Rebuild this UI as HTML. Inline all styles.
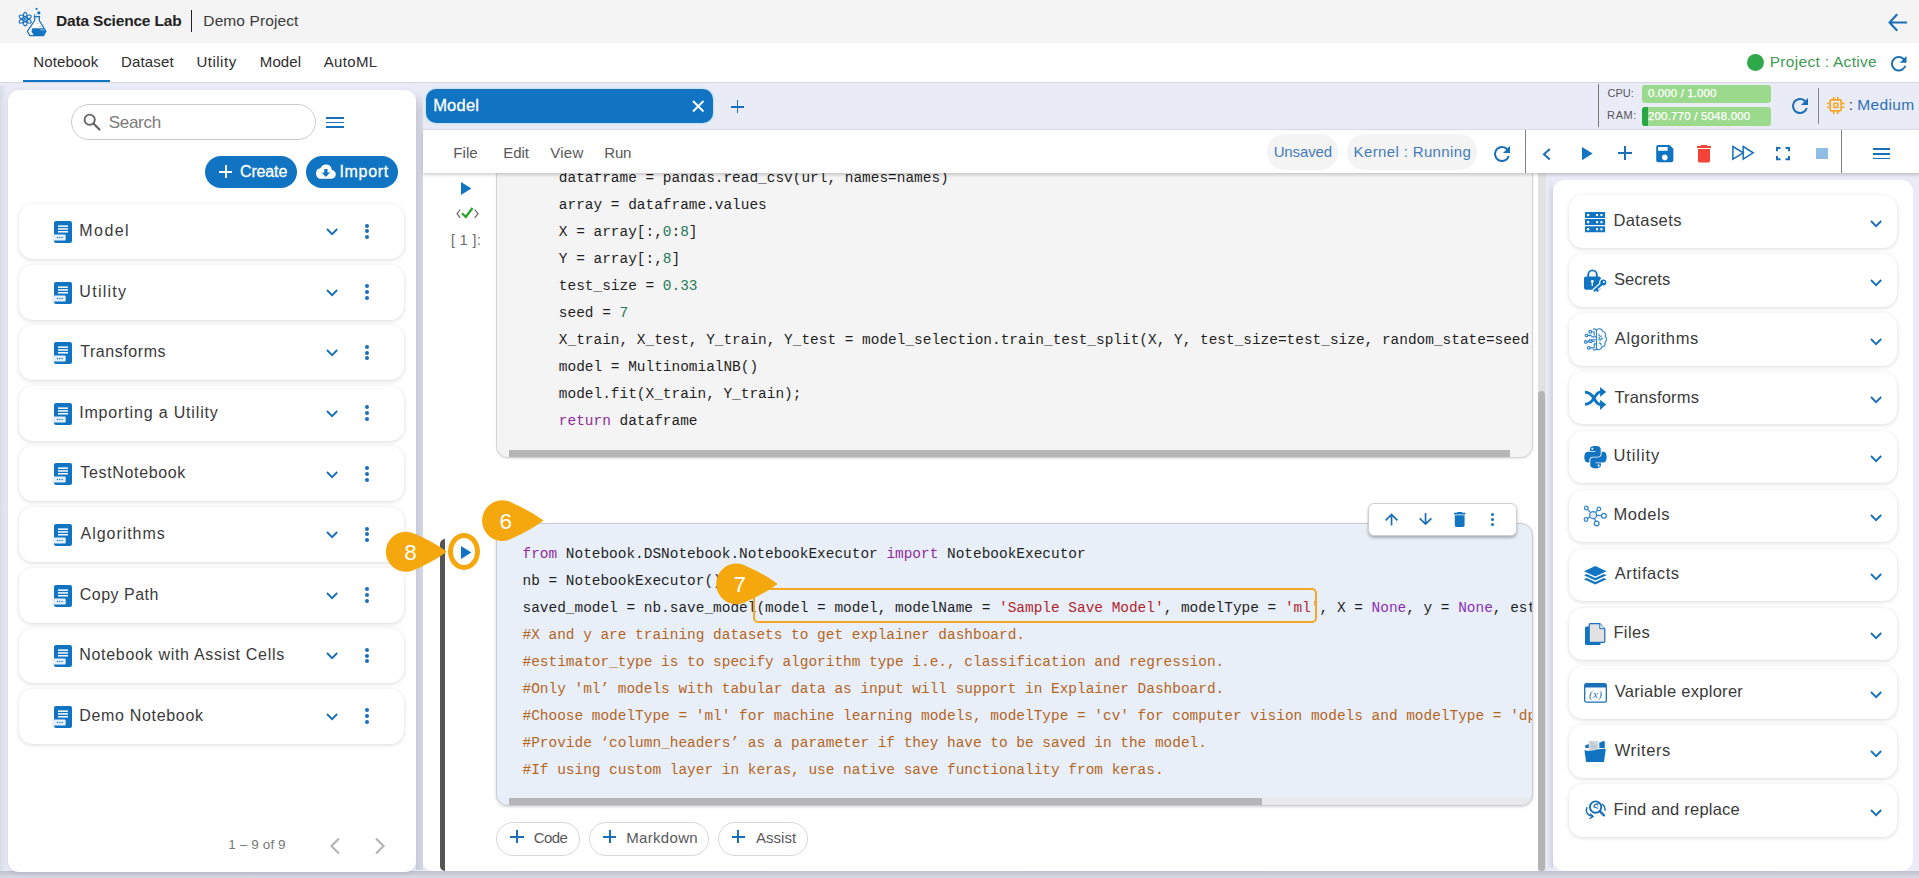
<!DOCTYPE html>
<html lang="en">
<head>
<meta charset="utf-8">
<title>Data Science Lab</title>
<style>
*{box-sizing:border-box;margin:0;padding:0}
html,body{width:1919px;height:878px;overflow:hidden}
body{position:relative;background:#e9ecf7;font-family:"Liberation Sans",sans-serif;color:#333;font-size:15px}
.abs{position:absolute}
.t{position:absolute;white-space:nowrap;line-height:1}
svg{position:absolute;overflow:visible}
.card{position:absolute;background:#fff;border-radius:14px;box-shadow:0 1px 4px rgba(0,0,0,.15)}
.code{position:absolute;font-family:"Liberation Mono",monospace;font-size:14.44px;line-height:27px;white-space:pre;color:#1f1f1f}
.kw{color:#8f2a9e}.num{color:#1f7a55}.str{color:#b0262b}.cm{color:#b5651d}.no{color:#8b2fb5}
</style>
</head>
<body>
<div class="abs" style="left:0px;top:870.5px;width:1919px;height:7.5px;background:linear-gradient(#bfc2ce,#d9dce6)"></div>
<div class="abs" style="left:0px;top:0px;width:1919px;height:42.5px;background:#f4f4f4"></div>
<div class="abs" style="left:0px;top:42.5px;width:1919px;height:40px;background:#fff"></div>
<div class="abs" style="left:0px;top:82px;width:1919px;height:1px;background:#d6d7de"></div>
<div class="abs" style="left:23px;top:80px;width:87px;height:2.4px;background:#1074c2"></div>
<svg style="left:14px;top:2px" width="40" height="40" viewBox="14 2 40 40">
<g fill="none" stroke="#1a6fb8" stroke-width="1.150">
<ellipse cx="25.200" cy="19.100" rx="6.800" ry="2.150" transform="rotate(90 25.200 19.100)"/><ellipse cx="25.200" cy="19.100" rx="6.800" ry="2.150" transform="rotate(30 25.200 19.100)"/><ellipse cx="25.200" cy="19.100" rx="6.800" ry="2.150" transform="rotate(150 25.200 19.100)"/>
<path d="M34.700 16.900V20.500L27.400 31.300 29.800 35.600H43.500L45.900 31.300 39.300 20.500V16.900" fill="#fff" stroke-width="1.250" stroke-linejoin="round"/>
<path d="M33.800 16.600H40.200" stroke-width="1.400"/>
</g>
<circle cx="25.200" cy="19.100" r="1.300" fill="#1074c2"/><circle cx="25.200" cy="19.100" r=".6" fill="#9fd0f5"/>
<path d="M32.400 28.300H44.100L45.700 31.300 43.300 35.300H33.700L31.400 31.300z" fill="#1074c2"/>
<rect x="40.300" y="29.400" width="4.600" height="1.100" fill="#7db5e2"/>
<path d="M36.300 23.100h3.200M38.600 26.500h2.800" stroke="#9aa3ad" stroke-width=".6"/>
<circle cx="36.550" cy="8.900" r="1.100" fill="#1074c2"/><circle cx="38.800" cy="12.800" r="1.650" fill="#1074c2"/><circle cx="34.600" cy="15" r=".8" fill="#1074c2"/>
</svg>
<div class="t" style="left:55.98px;top:13px;font-size:15.5px;color:#222;letter-spacing:-0.180px;font-weight:700;">Data Science Lab</div>
<div class="abs" style="left:190.5px;top:10px;width:1.6px;height:22px;background:#222"></div>
<div class="t" style="left:203.33px;top:13px;font-size:15.5px;color:#3a3a3a;letter-spacing:0.107px;">Demo Project</div>
<div class="t" style="left:33.27px;top:54px;font-size:15px;color:#2e2e2e;letter-spacing:0.112px;">Notebook</div>
<div class="t" style="left:120.97px;top:54px;font-size:15px;color:#2e2e2e;letter-spacing:0.157px;">Dataset</div>
<div class="t" style="left:196.44px;top:54px;font-size:15px;color:#2e2e2e;letter-spacing:0.504px;">Utility</div>
<div class="t" style="left:259.87px;top:54px;font-size:15px;color:#2e2e2e;letter-spacing:0.069px;">Model</div>
<div class="t" style="left:323.67px;top:54px;font-size:15px;color:#2e2e2e;letter-spacing:0.367px;">AutoML</div>
<svg style="left:1888px;top:13px" width="20" height="19" viewBox="0 0 20 19"><path d="M9.2 1.3L1.6 9.5l7.600000000000001 8.2M1.8 9.5H19" fill="none" stroke="#1a6fb8" stroke-width="2.1" stroke-linejoin="miter"/></svg>
<div class="abs" style="left:1747px;top:54px;width:17px;height:17px;background:#2fa84a;border-radius:50%"></div>
<div class="t" style="left:1769.73px;top:54px;font-size:15.5px;color:#3f9a52;letter-spacing:0.296px;">Project : Active</div>
<svg style="left:1889.8px;top:54.8px" width="17.5" height="17.5" viewBox="3 3 18 18"><path d="M17.65 6.35A7.95 7.95 0 0 0 12 4a8 8 0 1 0 7.73 10h-2.08A6 6 0 1 1 12 6c1.66 0 3.140 .69 4.220 1.78L13 11h7V4z" fill="#1a6fb8"/></svg>
<div class="abs" style="left:0px;top:86px;width:7px;height:785px;background:linear-gradient(90deg,#d9dce7,#e9ecf7)"></div>
<div class="abs" style="left:8px;top:90px;width:408px;height:782px;background:#fff;border-radius:11px;box-shadow:0 1px 4px rgba(90,95,130,.18)"></div>
<div class="abs" style="left:416.2px;top:92px;width:6.8px;height:778px;background:linear-gradient(90deg,#c9ccd8,#d4d6e1);-webkit-mask-image:linear-gradient(transparent,#000 16px)"></div>
<div class="abs" style="left:71px;top:104px;width:245px;height:36px;border:1px solid #cbcbcb;border-radius:18px;background:#fff"></div>
<svg style="left:83px;top:112.600px" width="18" height="18" viewBox="0 0 18 18"><circle cx="6.7" cy="6.7" r="5.1" fill="none" stroke="#666" stroke-width="1.9"/><path d="M10.5 10.5l6 6" stroke="#666" stroke-width="2.2" stroke-linecap="round"/></svg>
<div class="t" style="left:108.83px;top:114px;font-size:17px;color:#7a7a7a;letter-spacing:-0.321px;">Search</div>
<div class="abs" style="left:326px;top:117.0px;width:17.5px;height:1.9px;background:#1a6fb8"></div>
<div class="abs" style="left:326px;top:121.6px;width:17.5px;height:1.9px;background:#1a6fb8"></div>
<div class="abs" style="left:326px;top:126.2px;width:17.5px;height:1.9px;background:#1a6fb8"></div>
<div class="abs" style="left:205px;top:156px;width:92px;height:32px;background:#1074c2;border-radius:16px"></div>
<div class="abs" style="left:306px;top:156px;width:92px;height:32px;background:#1074c2;border-radius:16px"></div>
<div class="abs" style="left:219px;top:170.8px;width:13px;height:2px;background:#fff"></div>
<div class="abs" style="left:224.5px;top:165.3px;width:2px;height:13px;background:#fff"></div>
<div class="t" style="left:240.00px;top:164px;font-size:16px;color:#fff;letter-spacing:-0.142px;-webkit-text-stroke:.3px #fff;">Create</div>
<svg style="left:316px;top:161.300px" width="19.800" height="21.300" viewBox="0 0 24 24" preserveAspectRatio="none"><path d="M19.35 10.04A7.490 7.490 0 0 0 12 4C9.110 4 6.6 5.64 5.350 8.040A5.994 5.994 0 0 0 0 14c0 3.310 2.690 6 6 6h13c2.760 0 5-2.240 5-5 0-2.640-2.050-4.780-4.650-4.960zM17 13l-5 5-5-5h3V9h4v4h3z" fill="#fff"/></svg>
<div class="t" style="left:339.53px;top:164px;font-size:16px;color:#fff;letter-spacing:0.648px;-webkit-text-stroke:.3px #fff;">Import</div>
<div class="card" style="left:19px;top:203.9px;width:385px;height:55px"></div>
<svg style="left:51px;top:220.9px" width="21" height="22" viewBox="0 0 21 22"><g><rect x="3" y="0" width="18" height="22" rx="2" fill="#1074c2"/>
<rect x="7" y="4.400" width="10" height="1.5" fill="#fff"/><rect x="7" y="7.2" width="10" height="1.5" fill="#fff"/><rect x="7" y="10" width="10" height="1.5" fill="#fff"/>
<path d="M0 13.500h13.700a1 1 0 0 1 1 1v4a1 1 0 0 1-1 1H0l2-3z" fill="#e6f0fa"/>
<circle cx="6.5" cy="16.500" r=".7" fill="#1074c2"/><circle cx="8.8" cy="16.500" r=".7" fill="#1074c2"/><circle cx="11.100" cy="16.500" r=".7" fill="#1074c2"/></g></svg>
<div class="t" style="left:79.29px;top:223px;font-size:16px;color:#3a3a3a;letter-spacing:1.450px;">Model</div>
<svg style="left:326px;top:228.2px" width="12.2" height="7.2" viewBox="0 0 12.2 7.2"><path d="M1 1l5.100 5.100L11.200 1" fill="none" stroke="#1a6fb8" stroke-width="1.9"/></svg>
<div class="abs" style="left:364.5px;top:223.6px;width:4px;height:4px;background:#1a6fb8;border-radius:50%"></div>
<div class="abs" style="left:364.5px;top:229.4px;width:4px;height:4px;background:#1a6fb8;border-radius:50%"></div>
<div class="abs" style="left:364.5px;top:235.2px;width:4px;height:4px;background:#1a6fb8;border-radius:50%"></div>
<div class="card" style="left:19px;top:264.5px;width:385px;height:55px"></div>
<svg style="left:51px;top:281.5px" width="21" height="22" viewBox="0 0 21 22"><g><rect x="3" y="0" width="18" height="22" rx="2" fill="#1074c2"/>
<rect x="7" y="4.400" width="10" height="1.5" fill="#fff"/><rect x="7" y="7.2" width="10" height="1.5" fill="#fff"/><rect x="7" y="10" width="10" height="1.5" fill="#fff"/>
<path d="M0 13.500h13.700a1 1 0 0 1 1 1v4a1 1 0 0 1-1 1H0l2-3z" fill="#e6f0fa"/>
<circle cx="6.5" cy="16.500" r=".7" fill="#1074c2"/><circle cx="8.8" cy="16.500" r=".7" fill="#1074c2"/><circle cx="11.100" cy="16.500" r=".7" fill="#1074c2"/></g></svg>
<div class="t" style="left:79.37px;top:284px;font-size:16px;color:#3a3a3a;letter-spacing:1.260px;">Utility</div>
<svg style="left:326px;top:288.8px" width="12.2" height="7.2" viewBox="0 0 12.2 7.2"><path d="M1 1l5.100 5.100L11.200 1" fill="none" stroke="#1a6fb8" stroke-width="1.9"/></svg>
<div class="abs" style="left:364.5px;top:284.2px;width:4px;height:4px;background:#1a6fb8;border-radius:50%"></div>
<div class="abs" style="left:364.5px;top:290.0px;width:4px;height:4px;background:#1a6fb8;border-radius:50%"></div>
<div class="abs" style="left:364.5px;top:295.8px;width:4px;height:4px;background:#1a6fb8;border-radius:50%"></div>
<div class="card" style="left:19px;top:325.1px;width:385px;height:55px"></div>
<svg style="left:51px;top:342.1px" width="21" height="22" viewBox="0 0 21 22"><g><rect x="3" y="0" width="18" height="22" rx="2" fill="#1074c2"/>
<rect x="7" y="4.400" width="10" height="1.5" fill="#fff"/><rect x="7" y="7.2" width="10" height="1.5" fill="#fff"/><rect x="7" y="10" width="10" height="1.5" fill="#fff"/>
<path d="M0 13.500h13.700a1 1 0 0 1 1 1v4a1 1 0 0 1-1 1H0l2-3z" fill="#e6f0fa"/>
<circle cx="6.5" cy="16.500" r=".7" fill="#1074c2"/><circle cx="8.8" cy="16.500" r=".7" fill="#1074c2"/><circle cx="11.100" cy="16.500" r=".7" fill="#1074c2"/></g></svg>
<div class="t" style="left:80.25px;top:344px;font-size:16px;color:#3a3a3a;letter-spacing:0.558px;">Transforms</div>
<svg style="left:326px;top:349.4px" width="12.2" height="7.2" viewBox="0 0 12.2 7.2"><path d="M1 1l5.100 5.100L11.200 1" fill="none" stroke="#1a6fb8" stroke-width="1.9"/></svg>
<div class="abs" style="left:364.5px;top:344.8px;width:4px;height:4px;background:#1a6fb8;border-radius:50%"></div>
<div class="abs" style="left:364.5px;top:350.6px;width:4px;height:4px;background:#1a6fb8;border-radius:50%"></div>
<div class="abs" style="left:364.5px;top:356.40000000000003px;width:4px;height:4px;background:#1a6fb8;border-radius:50%"></div>
<div class="card" style="left:19px;top:385.7px;width:385px;height:55px"></div>
<svg style="left:51px;top:402.7px" width="21" height="22" viewBox="0 0 21 22"><g><rect x="3" y="0" width="18" height="22" rx="2" fill="#1074c2"/>
<rect x="7" y="4.400" width="10" height="1.5" fill="#fff"/><rect x="7" y="7.2" width="10" height="1.5" fill="#fff"/><rect x="7" y="10" width="10" height="1.5" fill="#fff"/>
<path d="M0 13.500h13.700a1 1 0 0 1 1 1v4a1 1 0 0 1-1 1H0l2-3z" fill="#e6f0fa"/>
<circle cx="6.5" cy="16.500" r=".7" fill="#1074c2"/><circle cx="8.8" cy="16.500" r=".7" fill="#1074c2"/><circle cx="11.100" cy="16.500" r=".7" fill="#1074c2"/></g></svg>
<div class="t" style="left:79.13px;top:405px;font-size:16px;color:#3a3a3a;letter-spacing:0.839px;">Importing a Utility</div>
<svg style="left:326px;top:410.0px" width="12.2" height="7.2" viewBox="0 0 12.2 7.2"><path d="M1 1l5.100 5.100L11.200 1" fill="none" stroke="#1a6fb8" stroke-width="1.9"/></svg>
<div class="abs" style="left:364.5px;top:405.40000000000003px;width:4px;height:4px;background:#1a6fb8;border-radius:50%"></div>
<div class="abs" style="left:364.5px;top:411.20000000000005px;width:4px;height:4px;background:#1a6fb8;border-radius:50%"></div>
<div class="abs" style="left:364.5px;top:417.00000000000006px;width:4px;height:4px;background:#1a6fb8;border-radius:50%"></div>
<div class="card" style="left:19px;top:446.3px;width:385px;height:55px"></div>
<svg style="left:51px;top:463.3px" width="21" height="22" viewBox="0 0 21 22"><g><rect x="3" y="0" width="18" height="22" rx="2" fill="#1074c2"/>
<rect x="7" y="4.400" width="10" height="1.5" fill="#fff"/><rect x="7" y="7.2" width="10" height="1.5" fill="#fff"/><rect x="7" y="10" width="10" height="1.5" fill="#fff"/>
<path d="M0 13.500h13.700a1 1 0 0 1 1 1v4a1 1 0 0 1-1 1H0l2-3z" fill="#e6f0fa"/>
<circle cx="6.5" cy="16.500" r=".7" fill="#1074c2"/><circle cx="8.8" cy="16.500" r=".7" fill="#1074c2"/><circle cx="11.100" cy="16.500" r=".7" fill="#1074c2"/></g></svg>
<div class="t" style="left:80.25px;top:465px;font-size:16px;color:#3a3a3a;letter-spacing:0.662px;">TestNotebook</div>
<svg style="left:326px;top:470.6px" width="12.2" height="7.2" viewBox="0 0 12.2 7.2"><path d="M1 1l5.100 5.100L11.200 1" fill="none" stroke="#1a6fb8" stroke-width="1.9"/></svg>
<div class="abs" style="left:364.5px;top:466.0px;width:4px;height:4px;background:#1a6fb8;border-radius:50%"></div>
<div class="abs" style="left:364.5px;top:471.8px;width:4px;height:4px;background:#1a6fb8;border-radius:50%"></div>
<div class="abs" style="left:364.5px;top:477.6px;width:4px;height:4px;background:#1a6fb8;border-radius:50%"></div>
<div class="card" style="left:19px;top:506.9px;width:385px;height:55px"></div>
<svg style="left:51px;top:523.9px" width="21" height="22" viewBox="0 0 21 22"><g><rect x="3" y="0" width="18" height="22" rx="2" fill="#1074c2"/>
<rect x="7" y="4.400" width="10" height="1.5" fill="#fff"/><rect x="7" y="7.2" width="10" height="1.5" fill="#fff"/><rect x="7" y="10" width="10" height="1.5" fill="#fff"/>
<path d="M0 13.500h13.700a1 1 0 0 1 1 1v4a1 1 0 0 1-1 1H0l2-3z" fill="#e6f0fa"/>
<circle cx="6.5" cy="16.500" r=".7" fill="#1074c2"/><circle cx="8.8" cy="16.500" r=".7" fill="#1074c2"/><circle cx="11.100" cy="16.500" r=".7" fill="#1074c2"/></g></svg>
<div class="t" style="left:80.57px;top:526px;font-size:16px;color:#3a3a3a;letter-spacing:0.958px;">Algorithms</div>
<svg style="left:326px;top:531.2px" width="12.2" height="7.2" viewBox="0 0 12.2 7.2"><path d="M1 1l5.100 5.100L11.200 1" fill="none" stroke="#1a6fb8" stroke-width="1.9"/></svg>
<div class="abs" style="left:364.5px;top:526.6px;width:4px;height:4px;background:#1a6fb8;border-radius:50%"></div>
<div class="abs" style="left:364.5px;top:532.4px;width:4px;height:4px;background:#1a6fb8;border-radius:50%"></div>
<div class="abs" style="left:364.5px;top:538.2px;width:4px;height:4px;background:#1a6fb8;border-radius:50%"></div>
<div class="card" style="left:19px;top:567.5px;width:385px;height:55px"></div>
<svg style="left:51px;top:584.5px" width="21" height="22" viewBox="0 0 21 22"><g><rect x="3" y="0" width="18" height="22" rx="2" fill="#1074c2"/>
<rect x="7" y="4.400" width="10" height="1.5" fill="#fff"/><rect x="7" y="7.2" width="10" height="1.5" fill="#fff"/><rect x="7" y="10" width="10" height="1.5" fill="#fff"/>
<path d="M0 13.500h13.700a1 1 0 0 1 1 1v4a1 1 0 0 1-1 1H0l2-3z" fill="#e6f0fa"/>
<circle cx="6.5" cy="16.500" r=".7" fill="#1074c2"/><circle cx="8.8" cy="16.500" r=".7" fill="#1074c2"/><circle cx="11.100" cy="16.500" r=".7" fill="#1074c2"/></g></svg>
<div class="t" style="left:79.80px;top:587px;font-size:16px;color:#3a3a3a;letter-spacing:0.477px;">Copy Path</div>
<svg style="left:326px;top:591.8px" width="12.2" height="7.2" viewBox="0 0 12.2 7.2"><path d="M1 1l5.100 5.100L11.200 1" fill="none" stroke="#1a6fb8" stroke-width="1.9"/></svg>
<div class="abs" style="left:364.5px;top:587.2px;width:4px;height:4px;background:#1a6fb8;border-radius:50%"></div>
<div class="abs" style="left:364.5px;top:593.0px;width:4px;height:4px;background:#1a6fb8;border-radius:50%"></div>
<div class="abs" style="left:364.5px;top:598.8000000000001px;width:4px;height:4px;background:#1a6fb8;border-radius:50%"></div>
<div class="card" style="left:19px;top:628.1px;width:385px;height:55px"></div>
<svg style="left:51px;top:645.1px" width="21" height="22" viewBox="0 0 21 22"><g><rect x="3" y="0" width="18" height="22" rx="2" fill="#1074c2"/>
<rect x="7" y="4.400" width="10" height="1.5" fill="#fff"/><rect x="7" y="7.2" width="10" height="1.5" fill="#fff"/><rect x="7" y="10" width="10" height="1.5" fill="#fff"/>
<path d="M0 13.500h13.700a1 1 0 0 1 1 1v4a1 1 0 0 1-1 1H0l2-3z" fill="#e6f0fa"/>
<circle cx="6.5" cy="16.500" r=".7" fill="#1074c2"/><circle cx="8.8" cy="16.500" r=".7" fill="#1074c2"/><circle cx="11.100" cy="16.500" r=".7" fill="#1074c2"/></g></svg>
<div class="t" style="left:79.29px;top:647px;font-size:16px;color:#3a3a3a;letter-spacing:0.690px;">Notebook with Assist Cells</div>
<svg style="left:326px;top:652.4px" width="12.2" height="7.2" viewBox="0 0 12.2 7.2"><path d="M1 1l5.100 5.100L11.200 1" fill="none" stroke="#1a6fb8" stroke-width="1.9"/></svg>
<div class="abs" style="left:364.5px;top:647.8000000000001px;width:4px;height:4px;background:#1a6fb8;border-radius:50%"></div>
<div class="abs" style="left:364.5px;top:653.6px;width:4px;height:4px;background:#1a6fb8;border-radius:50%"></div>
<div class="abs" style="left:364.5px;top:659.4000000000001px;width:4px;height:4px;background:#1a6fb8;border-radius:50%"></div>
<div class="card" style="left:19px;top:688.7px;width:385px;height:55px"></div>
<svg style="left:51px;top:705.7px" width="21" height="22" viewBox="0 0 21 22"><g><rect x="3" y="0" width="18" height="22" rx="2" fill="#1074c2"/>
<rect x="7" y="4.400" width="10" height="1.5" fill="#fff"/><rect x="7" y="7.2" width="10" height="1.5" fill="#fff"/><rect x="7" y="10" width="10" height="1.5" fill="#fff"/>
<path d="M0 13.500h13.700a1 1 0 0 1 1 1v4a1 1 0 0 1-1 1H0l2-3z" fill="#e6f0fa"/>
<circle cx="6.5" cy="16.500" r=".7" fill="#1074c2"/><circle cx="8.8" cy="16.500" r=".7" fill="#1074c2"/><circle cx="11.100" cy="16.500" r=".7" fill="#1074c2"/></g></svg>
<div class="t" style="left:79.29px;top:708px;font-size:16px;color:#3a3a3a;letter-spacing:0.672px;">Demo Notebook</div>
<svg style="left:326px;top:713.0px" width="12.2" height="7.2" viewBox="0 0 12.2 7.2"><path d="M1 1l5.100 5.100L11.200 1" fill="none" stroke="#1a6fb8" stroke-width="1.9"/></svg>
<div class="abs" style="left:364.5px;top:708.4000000000001px;width:4px;height:4px;background:#1a6fb8;border-radius:50%"></div>
<div class="abs" style="left:364.5px;top:714.2px;width:4px;height:4px;background:#1a6fb8;border-radius:50%"></div>
<div class="abs" style="left:364.5px;top:720.0000000000001px;width:4px;height:4px;background:#1a6fb8;border-radius:50%"></div>
<div class="t" style="left:228.27px;top:838px;font-size:13.5px;color:#777;letter-spacing:0.118px;">1 – 9 of 9</div>
<svg style="left:329px;top:837px" width="12" height="18" viewBox="0 0 12 18"><path d="M10 1.500L2.500 9l7.500 7.500" fill="none" stroke="#b5b5b5" stroke-width="2.2"/></svg>
<svg style="left:374px;top:837px" width="12" height="18" viewBox="0 0 12 18"><path d="M2 1.500L9.500 9 2 16.500" fill="none" stroke="#b5b5b5" stroke-width="2.2"/></svg>
<div class="abs" style="left:426px;top:89px;width:287px;height:34px;background:#1074c2;border-radius:10px;box-shadow:0 0 3px rgba(120,190,250,.6)"></div>
<div class="t" style="left:433.15px;top:97px;font-size:16.5px;color:#fff;letter-spacing:0.228px;-webkit-text-stroke:.3px #fff;">Model</div>
<svg style="left:691.500px;top:99.800px" width="12.5" height="12.5" viewBox="0 0 12.5 12.5"><path d="M1 1l10.500 10.500M11.500 1L1 11.500" stroke="#fff" stroke-width="1.9" fill="none"/></svg>
<div class="abs" style="left:730.7px;top:105.8px;width:13.6px;height:1.8px;background:#1a6fb8"></div>
<div class="abs" style="left:736.6px;top:99.9px;width:1.8px;height:13.6px;background:#1a6fb8"></div>
<div class="abs" style="left:1598px;top:84px;width:1px;height:43px;background:#777"></div>
<div class="t" style="left:1607.45px;top:88px;font-size:11px;color:#555;letter-spacing:0.057px;">CPU:</div>
<div class="t" style="left:1607.10px;top:110px;font-size:11px;color:#555;letter-spacing:0.601px;">RAM:</div>
<div class="abs" style="left:1642px;top:85px;width:129px;height:18px;background:#9bd98d;border-radius:3px"></div>
<div class="abs" style="left:1642px;top:107px;width:129px;height:19px;background:#9bd98d;border-radius:3px"></div>
<div class="abs" style="left:1642px;top:107px;width:5.5px;height:19px;background:#27a844;border-radius:3px 0 0 3px"></div>
<div class="t" style="left:1648.05px;top:88px;font-size:11.5px;color:#fff;letter-spacing:0.104px;-webkit-text-stroke:.25px #fff;">0.000 / 1.000</div>
<div class="t" style="left:1647.92px;top:111px;font-size:11.5px;color:#fff;letter-spacing:0.188px;-webkit-text-stroke:.25px #fff;">200.770 / 5048.000</div>
<svg style="left:1791.2px;top:96.6px" width="18" height="18" viewBox="3 3 18 18"><path d="M17.65 6.35A7.95 7.95 0 0 0 12 4a8 8 0 1 0 7.73 10h-2.08A6 6 0 1 1 12 6c1.66 0 3.140 .69 4.220 1.78L13 11h7V4z" fill="#1a6fb8"/></svg>
<div class="abs" style="left:1818px;top:87.5px;width:1px;height:36px;background:#888"></div>
<svg style="left:1827px;top:97px" width="17.6" height="17" viewBox="0 0 17.600 17"><g fill="none" stroke="#f5a521"><rect x="3.200" y="2.900" width="11" height="11" rx="1.300" stroke-width="1.700"/><rect x="6.800" y="6.400" width="4.100" height="4.100" stroke-width="1.400"/><path d="M6.700 0v2.300M10.800 0v2.300M6.700 14.600v2.300M10.800 14.600v2.300M0 6.500h2.500M0 10.200h2.500M15 6.500h2.500M15 10.200h2.500" stroke-width="1.600"/></g><rect x="8.100" y="7.700" width="1.500" height="1.500" fill="#fbd24a"/></svg>
<div class="t" style="left:1848.79px;top:97px;font-size:15.5px;color:#333;">:</div>
<div class="t" style="left:1857.23px;top:97px;font-size:15.5px;color:#2f6fb5;letter-spacing:0.369px;">Medium</div>
<div class="abs" style="left:1545.7px;top:180px;width:7.3px;height:688px;background:linear-gradient(90deg,#eceef8,#d0d3de);-webkit-mask-image:linear-gradient(transparent,#000 14px)"></div>
<div class="abs" style="left:423px;top:173px;width:1110px;height:698px;background:#fff;border-radius:0 0 0 9px"></div>
<div class="abs" style="left:1533px;top:173px;width:5.3px;height:698px;background:#fff"></div>
<div class="abs" style="left:1538.3px;top:173px;width:7.4px;height:698px;background:#e2e2e2"></div>
<div class="abs" style="left:1538.3px;top:390.5px;width:7.2px;height:480px;background:#b4b4b4;border-radius:4px"></div>
<svg style="left:460.700px;top:182px" width="11" height="13" viewBox="0 0 11 13"><path d="M0 0l10.400 6.500L0 13z" fill="#1074c2"/></svg>
<svg style="left:455.500px;top:207px" width="23" height="12" viewBox="0 0 23 12"><path d="M4.300 2.500L1 6.700l3.300 4.200M18.700 2.500L22 6.700l-3.300 4.200" fill="none" stroke="#666" stroke-width="1.200"/><path d="M6 6.200l3.800 3.800L16.500 1" fill="none" stroke="#27a327" stroke-width="2.300"/></svg>
<div class="t" style="left:451.01px;top:233px;font-size:14px;color:#6a6a6a;letter-spacing:0.528px;">[ 1 ]:</div>
<div class="abs" style="left:496.2px;top:150px;width:1036.600px;height:307.500px;background:#f4f4f4;border:1px solid #d4d4d4;border-radius:0 0 12px 12px;overflow:hidden;box-shadow:0 1px 2px rgba(0,0,0,.1)"><div class="code" style="left:27.0px;top:13.67px">    dataframe = pandas.read_csv(url, names=names)
    array = dataframe.values
    X = array[:,<span class="num">0</span>:<span class="num">8</span>]
    Y = array[:,<span class="num">8</span>]
    test_size = <span class="num">0.33</span>
    seed = <span class="num">7</span>
    X_train, X_test, Y_train, Y_test = model_selection.train_test_split(X, Y, test_size=test_size, random_state=seed)
    model = MultinomialNB()
    model.fit(X_train, Y_train);
    <span class="kw">return</span> dataframe</div><div class="abs" style="left:12px;bottom:0;width:1001px;height:7px;background:#b5b5b5"></div></div>
<div class="abs" style="left:496.2px;top:523px;width:1036.600px;height:283px;background:#e8eff9;border:1px solid #c9ccd2;border-radius:0 12px 12px 12px;overflow:hidden;box-shadow:0 1px 3px rgba(0,0,0,.18)"><div class="code" style="left:25.3px;top:17.27px"><span class="kw">from</span> Notebook.DSNotebook.NotebookExecutor <span class="kw">import</span> NotebookExecutor
nb = NotebookExecutor()
saved_model = nb.save_model(model = model, modelName = <span class="str">'Sample Save Model'</span>, modelType = <span class="str">'ml'</span>, X = <span class="no">None</span>, y = <span class="no">None</span>, estimator_type=<span class="str">''</span>)
<span class="cm">#X and y are training datasets to get explainer dashboard.</span>
<span class="cm">#estimator_type is to specify algorithm type i.e., classification and regression.</span>
<span class="cm">#Only 'ml’ models with tabular data as input will support in Explainer Dashboard.</span>
<span class="cm">#Choose modelType = 'ml' for machine learning models, modelType = 'cv' for computer vision models and modelType = 'dp' for data preprocessing models.</span>
<span class="cm">#Provide ‘column_headers’ as a parameter if they have to be saved in the model.</span>
<span class="cm">#If using custom layer in keras, use native save functionality from keras.</span></div><div class="abs" style="left:12px;bottom:0;width:1024px;height:7px;background:#e9e9e9"></div><div class="abs" style="left:12px;bottom:0;width:753px;height:7px;background:#b5b5b5"></div></div>
<div class="abs" style="left:440.1px;top:539px;width:5px;height:331.8px;background:#555;border-radius:5px 0 0 5px"></div>
<svg style="left:460.700px;top:545.900px" width="11" height="13" viewBox="0 0 11 13"><path d="M0 0l10.300 6.500L0 13z" fill="#1074c2"/></svg>
<div class="abs" style="left:1368.2px;top:503.1px;width:148.6px;height:32.5px;background:#fff;border:1px solid #cfcfcf;border-radius:6px;box-shadow:0 2px 3px rgba(0,0,0,.28)"></div>
<svg style="left:1385.300px;top:513.300px" width="13.100" height="12.6" viewBox="0 0 13.100 12.6"><path d="M6.550 12.600V1.500M.7 7.300l5.850-5.850 5.850 5.850" fill="none" stroke="#1a6fb8" stroke-width="1.700"/></svg>
<svg style="left:1418.900px;top:513.300px" width="13.100" height="12.6" viewBox="0 0 13.100 12.6"><path d="M6.550 0v11.100M.7 5.300l5.850 5.850 5.850-5.850" fill="none" stroke="#1a6fb8" stroke-width="1.700"/></svg>
<svg style="left:1453.600px;top:512px" width="11.400" height="15" viewBox="5 3 14 18" preserveAspectRatio="none"><path d="M6 19c0 1.100.9 2 2 2h8c1.100 0 2-.9 2-2V7H6v12zM19 4h-3.500l-1-1h-5l-1 1H5v2h14V4z" fill="#1074c2"/></svg>
<div class="abs" style="left:1491.3px;top:512.9px;width:3.2px;height:3.2px;background:#1a6fb8;border-radius:50%"></div>
<div class="abs" style="left:1491.3px;top:517.75px;width:3.2px;height:3.2px;background:#1a6fb8;border-radius:50%"></div>
<div class="abs" style="left:1491.3px;top:522.6px;width:3.2px;height:3.2px;background:#1a6fb8;border-radius:50%"></div>
<div class="abs" style="left:496.2px;top:822.1px;width:83.80000000000001px;height:33.6px;border:1px solid #d8d8d8;border-radius:17px;background:#fff"></div>
<div class="abs" style="left:510px;top:835.7px;width:13.5px;height:2px;background:#1a6fb8"></div>
<div class="abs" style="left:515.75px;top:829.9px;width:2px;height:13.5px;background:#1a6fb8"></div>
<div class="t" style="left:533.85px;top:830px;font-size:15px;color:#595959;letter-spacing:-0.580px;">Code</div>
<div class="abs" style="left:589.1px;top:822.1px;width:119.89999999999998px;height:33.6px;border:1px solid #d8d8d8;border-radius:17px;background:#fff"></div>
<div class="abs" style="left:602.8px;top:835.7px;width:13.5px;height:2px;background:#1a6fb8"></div>
<div class="abs" style="left:608.55px;top:829.9px;width:2px;height:13.5px;background:#1a6fb8"></div>
<div class="t" style="left:626.17px;top:830px;font-size:15px;color:#595959;letter-spacing:0.328px;">Markdown</div>
<div class="abs" style="left:718.3px;top:822.1px;width:89.70000000000005px;height:33.6px;border:1px solid #d8d8d8;border-radius:17px;background:#fff"></div>
<div class="abs" style="left:731.7px;top:835.7px;width:13.5px;height:2px;background:#1a6fb8"></div>
<div class="abs" style="left:737.45px;top:829.9px;width:2px;height:13.5px;background:#1a6fb8"></div>
<div class="t" style="left:755.97px;top:830px;font-size:15px;color:#595959;letter-spacing:0.026px;">Assist</div>
<div class="abs" style="left:423px;top:129px;width:1496px;height:44px;background:#fff;box-shadow:0 2px 3px rgba(0,0,0,.18);border-top:1px solid #d9dae0"></div>
<div class="t" style="left:453.37px;top:145px;font-size:15px;color:#585858;letter-spacing:0.042px;">File</div>
<div class="t" style="left:503.37px;top:145px;font-size:15px;color:#585858;letter-spacing:-0.070px;">Edit</div>
<div class="t" style="left:550.24px;top:145px;font-size:15px;color:#585858;letter-spacing:0.260px;">View</div>
<div class="t" style="left:604.27px;top:145px;font-size:15px;color:#585858;letter-spacing:-0.210px;">Run</div>
<div class="abs" style="left:1267.3px;top:134.2px;width:70.4px;height:35.8px;background:#f4f4f4;border-radius:18px"></div>
<div class="abs" style="left:1347px;top:134.2px;width:130.2px;height:35.8px;background:#f4f4f4;border-radius:18px"></div>
<div class="t" style="left:1273.64px;top:144px;font-size:15px;color:#447cb8;letter-spacing:-0.115px;">Unsaved</div>
<div class="t" style="left:1353.57px;top:144px;font-size:15px;color:#447cb8;letter-spacing:0.364px;">Kernel : Running</div>
<svg style="left:1492.6px;top:145.4px" width="18" height="18" viewBox="3 3 18 18"><path d="M17.65 6.35A7.95 7.95 0 0 0 12 4a8 8 0 1 0 7.73 10h-2.08A6 6 0 1 1 12 6c1.66 0 3.140 .69 4.220 1.78L13 11h7V4z" fill="#1a6fb8"/></svg>
<div class="abs" style="left:1525px;top:129.5px;width:1px;height:43.5px;background:#808080"></div>
<div class="abs" style="left:1841px;top:129.5px;width:1px;height:43.5px;background:#808080"></div>
<svg style="left:1541.500px;top:147.500px" width="9" height="12.5" viewBox="0 0 9 12.5"><path d="M7.800 1L2 6.250l5.800 5.250" fill="none" stroke="#1a6fb8" stroke-width="2"/></svg>
<svg style="left:1581.700px;top:146.800px" width="11" height="13.2" viewBox="0 0 11 13.2"><path d="M0 0l10.600 6.600L0 13.200z" fill="#1074c2"/></svg>
<div class="abs" style="left:1618.1px;top:152.4px;width:13.8px;height:1.9px;background:#1a6fb8"></div>
<div class="abs" style="left:1624.05px;top:146.45px;width:1.9px;height:13.8px;background:#1a6fb8"></div>
<svg style="left:1655.600px;top:145.200px" width="17.6" height="17.2" viewBox="3 3 18 18"><path d="M17 3H5a2 2 0 0 0-2 2v14a2 2 0 0 0 2 2h14c1.100 0 2-.9 2-2V7l-4-4zm-5 16c-1.660 0-3-1.340-3-3s1.340-3 3-3 3 1.340 3 3-1.340 3-3 3zm3-10H5V5h10v4z" fill="#1074c2"/></svg>
<svg style="left:1696.700px;top:144.800px" width="14" height="17.6" viewBox="5 3 14 18" preserveAspectRatio="none"><path d="M6 19c0 1.100.9 2 2 2h8c1.100 0 2-.9 2-2V7H6v12zM19 4h-3.500l-1-1h-5l-1 1H5v2h14V4z" fill="#f44336"/></svg>
<svg style="left:1731.600px;top:145.200px" width="22.4" height="15.6" viewBox="0 0 22.4 15.6"><path d="M.9 1.500l10.300 6.300L.9 14.100zM11.200 1.500l10 6.300-10 6.300z" fill="none" stroke="#1a6fb8" stroke-width="1.5" stroke-linejoin="miter"/></svg>
<svg style="left:1775.700px;top:146.800px" width="14" height="13.2" viewBox="0 0 14 13.2"><path d="M1 4.300V1h3.500M9.500 1H13v3.300M13 8.900v3.300H9.500M4.500 12.200H1V8.900" fill="none" stroke="#1a6fb8" stroke-width="2"/></svg>
<div class="abs" style="left:1816.3px;top:147.9px;width:11.4px;height:11px;background:#8fbde6"></div>
<div class="abs" style="left:1872.8px;top:148.3px;width:17.4px;height:1.8px;background:#1a6fb8"></div>
<div class="abs" style="left:1872.8px;top:152.9px;width:17.4px;height:1.8px;background:#1a6fb8"></div>
<div class="abs" style="left:1872.8px;top:157.5px;width:17.4px;height:1.8px;background:#1a6fb8"></div>
<div class="abs" style="left:753.400px;top:587.900px;width:563.300px;height:35px;border:2px solid #f0a826;border-radius:5px"></div>
<svg style="left:0;top:0" width="1919" height="878" viewBox="0 0 1919 878"><path d="M447.0 551.8Q432.29 541.32 415.63 534.33A20 20 0 1 0 415.63 569.27Q432.29 562.28 447.0 551.8z" fill="#f5a80e"/></svg>
<div class="t" style="left:404.23px;top:542px;font-size:22.5px;color:#fff;">8</div>
<svg style="left:0;top:0" width="1919" height="878" viewBox="0 0 1919 878"><path d="M543.6 520.6Q528.99 510.03 512.40 502.94A20.3 20.3 0 1 0 512.40 538.26Q528.99 531.17 543.6 520.6z" fill="#f5a80e"/></svg>
<div class="t" style="left:499.48px;top:511px;font-size:22.5px;color:#fff;">6</div>
<svg style="left:0;top:0" width="1919" height="878" viewBox="0 0 1919 878"><path d="M777.7 583.9Q763.09 573.33 746.50 566.24A20.3 20.3 0 1 0 746.50 601.56Q763.09 594.47 777.7 583.9z" fill="#f5a80e"/></svg>
<div class="t" style="left:733.45px;top:574px;font-size:22.5px;color:#fff;">7</div>
<div class="abs" style="left:448.100px;top:532.700px;width:31.800px;height:37px;border:5px solid #f5a80e;border-radius:50%"></div>
<div class="abs" style="left:1553px;top:180.4px;width:360px;height:690.5px;background:#fff;border-radius:12px"></div>
<div class="card" style="left:1569px;top:195.2px;width:328px;height:52.500px"></div>
<div class="t" style="left:1613.45px;top:212px;font-size:16.5px;color:#3a3a3a;letter-spacing:0.405px;">Datasets</div>
<svg style="left:1869.500px;top:219.7px" width="12.2" height="7.2" viewBox="0 0 12.2 7.2"><path d="M1 1l5.100 5.100L11.200 1" fill="none" stroke="#1a6fb8" stroke-width="1.9"/></svg>
<div class="card" style="left:1569px;top:254.1px;width:328px;height:52.500px"></div>
<div class="t" style="left:1614.06px;top:271px;font-size:16.5px;color:#3a3a3a;letter-spacing:0.034px;">Secrets</div>
<svg style="left:1869.500px;top:278.6px" width="12.2" height="7.2" viewBox="0 0 12.2 7.2"><path d="M1 1l5.100 5.100L11.200 1" fill="none" stroke="#1a6fb8" stroke-width="1.9"/></svg>
<div class="card" style="left:1569px;top:313.0px;width:328px;height:52.500px"></div>
<div class="t" style="left:1614.77px;top:330px;font-size:16.5px;color:#3a3a3a;letter-spacing:0.620px;">Algorithms</div>
<svg style="left:1869.500px;top:337.5px" width="12.2" height="7.2" viewBox="0 0 12.2 7.2"><path d="M1 1l5.100 5.100L11.200 1" fill="none" stroke="#1a6fb8" stroke-width="1.9"/></svg>
<div class="card" style="left:1569px;top:371.9px;width:328px;height:52.500px"></div>
<div class="t" style="left:1614.44px;top:389px;font-size:16.5px;color:#3a3a3a;letter-spacing:0.183px;">Transforms</div>
<svg style="left:1869.500px;top:396.4px" width="12.2" height="7.2" viewBox="0 0 12.2 7.2"><path d="M1 1l5.100 5.100L11.200 1" fill="none" stroke="#1a6fb8" stroke-width="1.9"/></svg>
<div class="card" style="left:1569px;top:430.8px;width:328px;height:52.500px"></div>
<div class="t" style="left:1613.53px;top:447px;font-size:16.5px;color:#3a3a3a;letter-spacing:0.896px;">Utility</div>
<svg style="left:1869.500px;top:455.3px" width="12.2" height="7.2" viewBox="0 0 12.2 7.2"><path d="M1 1l5.100 5.100L11.200 1" fill="none" stroke="#1a6fb8" stroke-width="1.9"/></svg>
<div class="card" style="left:1569px;top:489.7px;width:328px;height:52.500px"></div>
<div class="t" style="left:1613.45px;top:506px;font-size:16.5px;color:#3a3a3a;letter-spacing:0.590px;">Models</div>
<svg style="left:1869.500px;top:514.2px" width="12.2" height="7.2" viewBox="0 0 12.2 7.2"><path d="M1 1l5.100 5.100L11.200 1" fill="none" stroke="#1a6fb8" stroke-width="1.9"/></svg>
<div class="card" style="left:1569px;top:548.6px;width:328px;height:52.500px"></div>
<div class="t" style="left:1614.77px;top:565px;font-size:16.5px;color:#3a3a3a;letter-spacing:0.591px;">Artifacts</div>
<svg style="left:1869.500px;top:573.1px" width="12.2" height="7.2" viewBox="0 0 12.2 7.2"><path d="M1 1l5.100 5.100L11.200 1" fill="none" stroke="#1a6fb8" stroke-width="1.9"/></svg>
<div class="card" style="left:1569px;top:607.5px;width:328px;height:52.500px"></div>
<div class="t" style="left:1613.45px;top:624px;font-size:16.5px;color:#3a3a3a;letter-spacing:0.354px;">Files</div>
<svg style="left:1869.500px;top:632.0px" width="12.2" height="7.2" viewBox="0 0 12.2 7.2"><path d="M1 1l5.100 5.100L11.200 1" fill="none" stroke="#1a6fb8" stroke-width="1.9"/></svg>
<div class="card" style="left:1569px;top:666.4px;width:328px;height:52.500px"></div>
<div class="t" style="left:1614.73px;top:683px;font-size:16.5px;color:#3a3a3a;letter-spacing:0.289px;">Variable explorer</div>
<svg style="left:1869.500px;top:690.9px" width="12.2" height="7.2" viewBox="0 0 12.2 7.2"><path d="M1 1l5.100 5.100L11.200 1" fill="none" stroke="#1a6fb8" stroke-width="1.9"/></svg>
<div class="card" style="left:1569px;top:725.3px;width:328px;height:52.500px"></div>
<div class="t" style="left:1614.73px;top:742px;font-size:16.5px;color:#3a3a3a;letter-spacing:0.603px;">Writers</div>
<svg style="left:1869.500px;top:749.8px" width="12.2" height="7.2" viewBox="0 0 12.2 7.2"><path d="M1 1l5.100 5.100L11.200 1" fill="none" stroke="#1a6fb8" stroke-width="1.9"/></svg>
<div class="card" style="left:1569px;top:784.2px;width:328px;height:52.500px"></div>
<div class="t" style="left:1613.45px;top:801px;font-size:16.5px;color:#3a3a3a;letter-spacing:0.225px;">Find and replace</div>
<svg style="left:1869.500px;top:808.7px" width="12.2" height="7.2" viewBox="0 0 12.2 7.2"><path d="M1 1l5.100 5.100L11.200 1" fill="none" stroke="#1a6fb8" stroke-width="1.9"/></svg>
<svg style="left:1584.9px;top:211.7px" width="20.1" height="20.2" viewBox="0 0 20.1 20.2"><rect x="0" y="0.0" width="20.1" height="6" rx=".5" fill="#1074c2"/><circle cx="3.100" cy="3.0" r="1.300" fill="#fff"/><rect x="11" y="2.0" width="2.100" height="2.100" fill="#fff"/><rect x="15.400" y="2.0" width="2.100" height="2.100" fill="#fff"/><rect x="0" y="7.1" width="20.1" height="6" rx=".5" fill="#1074c2"/><circle cx="3.100" cy="10.1" r="1.300" fill="#fff"/><rect x="11" y="9.1" width="2.100" height="2.100" fill="#fff"/><rect x="15.400" y="9.1" width="2.100" height="2.100" fill="#fff"/><rect x="0" y="14.2" width="20.1" height="6" rx=".5" fill="#1074c2"/><circle cx="3.100" cy="17.2" r="1.300" fill="#fff"/><rect x="11" y="16.2" width="2.100" height="2.100" fill="#fff"/><rect x="15.400" y="16.2" width="2.100" height="2.100" fill="#fff"/></svg>
<svg style="left:1584px;top:268.9px" width="22.5" height="22.5" viewBox="0 0 22.5 22.5"><path d="M4.200 8.500V5.700a4.300 4.300 0 0 1 8.600 0V8.500" fill="none" stroke="#1074c2" stroke-width="1.900"/><rect x="0" y="7.600" width="16.800" height="13.200" rx="2" fill="#1074c2"/><circle cx="8.300" cy="12.300" r="1.400" fill="#fff"/><rect x="7.600" y="12.500" width="1.400" height="4.300" fill="#fff"/><path d="M10.600 21.400l8.500-7.400" stroke="#fff" stroke-width="4.600" stroke-linecap="round"/><circle cx="19.300" cy="13.600" r="4.100" fill="#fff"/><path d="M10.600 21.500l8.300-7.300M12.300 20.200l1.300 1.400" stroke="#1074c2" stroke-width="2.300" stroke-linecap="round"/><circle cx="19.300" cy="13.600" r="3" fill="#1074c2"/><circle cx="19.900" cy="13" r="1" fill="#fff"/></svg>
<svg style="left:1584px;top:328px" width="23" height="23" viewBox="0 0 23 23"><g fill="none" stroke="#2f83cf" stroke-width="1.150" stroke-linecap="round" stroke-linejoin="round"><path d="M12.500 2V21.200"/><path d="M12.500 2.400C13.800 0 18 .3 18.500 3.200 21 3.400 22.400 6.200 21 8.300c2 1.500 2 4.500 0 6 .8 2.500-1 4.700-3.200 4.500-.6 2.800-4 3.800-5.300 1.800"/><path d="M12.500 2.400c-.5-1.400-2.100-2-3.200-1.200M12.500 20.600c-.6 1.400-2.200 1.900-3.300 1"/><path d="M14.800 6.300c.2 1.600 1.500 2.300 2.700 1.800M18.900 10.400c-1.400-.2-2.300.6-2.300 1.800M15.200 9.300v2.900M15.300 14.900c1.200.1 2 1 1.800 2.200"/><circle cx="6.300" cy="3.700" r="1.350"/><circle cx="2.500" cy="7.300" r="1.350"/><circle cx="1.800" cy="13.900" r="1.350"/><circle cx="6.800" cy="13.300" r="1.350"/><circle cx="4.800" cy="19.800" r="1.350"/><path d="M7.700 3.700h2.500v3.500M3.900 7.300h3l1.200 1.600h4.400M3.200 13.900h1.200l1-2.200h7.100M8.200 13.300h2M6.200 19.800h4v-3.900h2.300"/></g></svg>
<svg style="left:1584.9px;top:387.1px" width="21.2" height="23" viewBox="0 0 21.200 23"><g fill="none" stroke="#1074c2" stroke-width="2.900"><path d="M0 5.300C5.200 5.300 7.100 8.200 8.950 11.300S12.400 17.500 15.800 17.500"/><path d="M0 17.300C5.200 17.300 7.100 14.400 8.950 11.300S12.400 4.900 15.800 4.900"/></g><path d="M15.100 0L21.200 4.900 15.100 9.800zM15.100 12.700L21.200 17.600 15.100 22.900z" fill="#1074c2"/></svg>
<svg style="left:1584px;top:446px" width="23" height="22.8" viewBox="0 32 448 456"><path d="M439.8 200.5c-7.700-30.900-22.300-54.200-53.400-54.200h-40.100v47.400c0 36.800-31.200 67.800-66.800 67.800H172.700c-29.200 0-53.400 25-53.400 54.300v101.800c0 29 25.200 46 53.400 54.300 33.800 9.900 66.300 11.700 106.800 0 26.900-7.800 53.400-23.500 53.400-54.300v-40.700H226.200v-13.600h160.200c31.100 0 42.600-21.700 53.400-54.200 11.200-33.500 10.700-65.700 0-108.600zM286.200 404c11.100 0 20.100 9.100 20.100 20.300 0 11.300-9 20.400-20.100 20.400-11 0-20.100-9.200-20.100-20.400.1-11.300 9.100-20.300 20.100-20.300zM167.800 248.100h106.800c29.700 0 53.400-24.500 53.400-54.300V91.900c0-29-24.400-50.700-53.400-55.600-35.800-5.900-74.700-5.600-106.800.1-45.200 8-53.400 24.700-53.400 55.600v40.700h106.900v13.600h-147c-31.100 0-58.300 18.700-66.800 54.200-9.800 40.700-10.200 66.100 0 108.600 7.600 31.600 25.700 54.200 56.800 54.200H101v-48.800c0-35.300 30.500-66.400 66.800-66.400zm-6.700-142.600c-11.100 0-20.100-9.100-20.100-20.300.1-11.300 9-20.400 20.100-20.400 11 0 20.100 9.200 20.100 20.400s-9 20.300-20.100 20.300z" fill="#1074c2"/></svg>
<svg style="left:1584px;top:505px" width="23" height="22" viewBox="0 0 23 22"><g fill="none" stroke="#2f83cf" stroke-width="1.250"><path d="M6.63 7.58L3.54 4.31"/><circle cx="2.3" cy="3" r="1.8"/><path d="M11.52 7.53L13.59 5.23"/><circle cx="14.8" cy="3.9" r="1.8"/><path d="M12.70 10.37L17.50 10.59"/><circle cx="19.9" cy="10.7" r="2.4"/><path d="M10.53 13.50L11.74 16.30"/><circle cx="12.7" cy="18.5" r="2.4"/><path d="M6.02 12.06L3.54 13.57"/><circle cx="2" cy="14.5" r="1.8"/><circle cx="9.1" cy="10.2" r="3.500" fill="#e4edf7"/></g></svg>
<svg style="left:1584.2px;top:565.6px" width="22.6" height="18.6" viewBox="0 0 22.600 18.600"><path d="M11.300 0L22.600 5.300 11.300 10.600 0 5.300z" fill="#1074c2"/><path d="M0 9.200l2.700-1.300 8.600 4 8.600-4 2.700 1.300-11.300 5.300z" fill="#1074c2"/><path d="M0 13.200l2.700-1.300 8.600 4 8.600-4 2.700 1.300-11.300 5.300z" fill="#1074c2"/></svg>
<svg style="left:1585.3px;top:622.9px" width="20.5" height="22" viewBox="0 0 20.5 22"><path d="M1.500 3.500h3v16.300h11v2.200H1.500A1.500 1.500 0 0 1 0 20.500V5a1.500 1.500 0 0 1 1.500-1.500z" fill="#1074c2"/><path d="M5.200.7h9.600l5 5v12.600a1 1 0 0 1-1 1H5.200a1 1 0 0 1-1-1V1.700a1 1 0 0 1 1-1z" fill="#e2e2e2" stroke="#1a6fb8" stroke-width="1.200"/><path d="M14.800.7v5h5" fill="#f4f4f4" stroke="#1a6fb8" stroke-width="1"/></svg>
<svg style="left:1584px;top:683px" width="23" height="19.8" viewBox="0 0 23 19.800"><rect x=".7" y=".7" width="21.600" height="18.400" rx="1.600" fill="#fff" stroke="#1a6fb8" stroke-width="1.300"/><path d="M.7 4.400V2.300A1.600 1.600 0 0 1 2.300.7h18.400a1.600 1.600 0 0 1 1.600 1.600v2.100z" fill="#1a6fb8"/><text x="11.700" y="15" text-anchor="middle" font-family="Liberation Serif,serif" font-style="italic" font-size="11" letter-spacing=".4" fill="#1a6fb8">(x)</text></svg>
<svg style="left:1584px;top:740.9px" width="22.2" height="21.1" viewBox="0 0 22.200 21.100"><path d="M1.300 4.300l3.500-1.200v4H1.300zM15.300 1.700L19.600 0a1 1 0 0 1 1.200.9v6.200h-5.500z" fill="#1074c2"/><rect x="5.100" y=".4" width="8.900" height="8.600" fill="#d6dbe0" stroke="#b9c4cf" stroke-width=".5"/><path d="M6.500 2.300h4M6.500 4h6.200M6.500 5.600h6.200M6.500 7.200h6.200" stroke="#aab6c2" stroke-width=".8"/><path d="M.4 9.200c5 .9 9.300.6 14.200-.9 2.600-.7 5-.8 7.200-.3l-1.700 12.200a1 1 0 0 1-1 .9H3a1 1 0 0 1-1-.9z" fill="#1074c2"/></svg>
<svg style="left:1585.2px;top:800.2px" width="21" height="19.2" viewBox="0 0 21 19.200"><g fill="none" stroke="#1a6fb8" stroke-linecap="round"><circle cx="10.600" cy="7.100" r="5.700" stroke-width="1.900"/><path d="M14.900 11.400l4.100 4" stroke-width="2.300"/><path d="M1.800 7.800c-1.300 3.800.3 7.500 5.600 8.600" stroke-width="1.500"/><path d="M5.400 14l2.800 2.500-3.300 2" stroke-width="1.400" stroke-linejoin="round"/><path d="M17.400 4.300c2 1.500 2.900 3.600 2.700 6.100" stroke-width="1.300"/><path d="M12 4.200c-1.700-.2-3 .9-3.100 2.600l3.800 1.400" stroke-width="1.200"/><path d="M13.600 3.300l-1.900 1 1.500 1.400" stroke-width="1"/></g></svg>
</body>
</html>
